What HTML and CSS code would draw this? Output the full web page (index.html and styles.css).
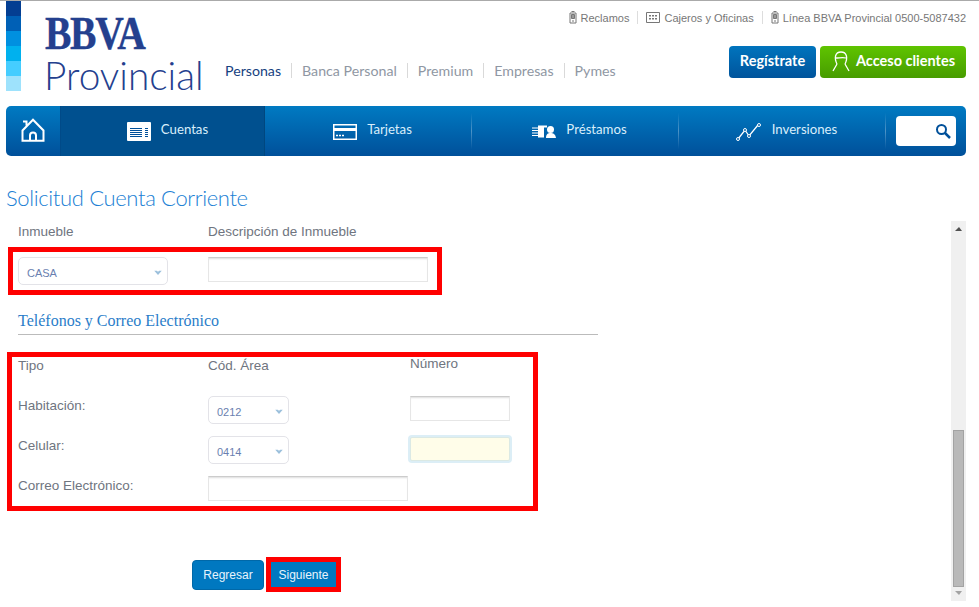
FILE: index.html
```html
<!DOCTYPE html>
<html lang="es">
<head>
<meta charset="utf-8">
<title>Solicitud Cuenta Corriente</title>
<link rel="stylesheet" href="styles.css">
</head>
<body>
<header class="header">
  <div class="strip"><i class="s1"></i><i class="s2"></i><i class="s3"></i><i class="s4"></i><i class="s5"></i><i class="s6"></i></div>
  <div class="logo">
    <div class="logo-bbva">BBVA</div>
    <div class="logo-prov">Provincial</div>
  </div>
  <nav class="segments">
    <a class="seg seg-on">Personas</a><a class="seg">Banca Personal</a><a class="seg">Premium</a><a class="seg">Empresas</a><a class="seg">Pymes</a>
  </nav>
  <div class="header-right">
    <div class="toplinks">
      <a class="toplink"><svg width="8" height="13" viewBox="0 0 8 13"><path d="M1 2h6v10H1z" fill="none" stroke="#777"/><path d="M2.500 0.500h3M2.500 3.500h3v4h-3z" fill="#999" stroke="#777"/><path d="M3 10h2" stroke="#777"/></svg>Reclamos</a>
      <a class="toplink"><svg width="14" height="11" viewBox="0 0 14 11"><path d="M.5.500h13v10H.5z" fill="none" stroke="#777"/><path d="M3 3h2v1.500H3zM6 3h2v1.500H6zM9 3h2v1.500H9zM3 6h2v1.500H3zM6 6h2v1.500H6zM9 6h2v1.500H9z" fill="#777"/></svg>Cajeros y Oficinas</a>
      <a class="toplink"><svg width="8" height="13" viewBox="0 0 8 13"><path d="M1 2h6v10H1z" fill="none" stroke="#777"/><path d="M2.500 0.500h3M2.500 3.500h3v4h-3z" fill="#999" stroke="#777"/><path d="M3 10h2" stroke="#777"/></svg>Línea BBVA Provincial 0500-5087432</a>
    </div>
    <div class="actions">
      <a class="btn-top btn-blue">Regístrate</a>
      <a class="btn-top btn-green"><svg width="20" height="24" viewBox="0 0 20 24"><path d="M6 15C3 9 4 3 10 3s7 6 4 12M6 15l-4 7M14 15l4 7M5 9c3 0 7-1 10 0" fill="none" stroke="#fff" stroke-width="1.300"/></svg>Acceso clientes</a>
    </div>
  </div>
</header>

<nav class="mainnav">
  <a class="nav-home"><svg width="24" height="24" viewBox="0 0 24 24"><path d="M1.500 12.500 12 1.800 22.500 12.500V22.800H1.500zM9 22.800v-5.300a3 3 0 0 1 6 0v5.300M2 3.500h3.500v4" fill="none" stroke="#fff" stroke-width="2"/></svg></a>
  <a class="nav-item nav-active"><svg width="24" height="19" viewBox="0 0 24 19"><rect y="0" width="24" height="19" rx="1" fill="#fff"/><path d="M3 6.500h12M3 8.500h12M3 10.500h12M3 12.500h12M3 14.500h12M18 6.500h3M18 8.500h3M18 10.500h3M18 12.500h3M18 14.500h3" stroke="#00509a"/></svg>Cuentas</a>
  <a class="nav-item"><svg width="24" height="16" viewBox="0 0 24 16"><rect x=".75" y=".75" width="22.500" height="14.500" fill="none" stroke="#fff" stroke-width="1.500"/><path d="M0 4h24v3H0z" fill="#fff"/><path d="M3 11.500h2M6 11.500h2M9 11.500h2" stroke="#fff" stroke-width="1.500"/></svg>Tarjetas</a>
  <a class="nav-item"><svg width="24" height="13" viewBox="0 0 24 13"><path d="M0 3h6M0 5.500h6M0 8h6M0 10.500h6" stroke="#fff"/><path d="M6 .5h6v12H6z" fill="#fff"/><path d="M12 .5h3v2h-3z" fill="#fff"/><circle cx="18.500" cy="4.500" r="3.500" fill="#fff"/><path d="M14 13c0-4 2-5 4.500-5S23.500 9 24 13z" fill="#fff"/></svg>Préstamos</a>
  <a class="nav-item"><svg width="26" height="18" viewBox="0 0 26 18"><path d="M2 16 9 7l4 6 9-11" fill="none" stroke="#fff" stroke-width="1.300"/><circle cx="2" cy="16" r="1.500" fill="#0060a8" stroke="#fff"/><circle cx="9" cy="7" r="1.500" fill="#0060a8" stroke="#fff"/><circle cx="13" cy="13" r="1.500" fill="#0060a8" stroke="#fff"/><circle cx="23" cy="2" r="1.500" fill="#0060a8" stroke="#fff"/></svg>Inversiones</a>
  <div class="nav-search">
    <div class="searchbox"><svg width="16" height="16" viewBox="0 0 16 16"><circle cx="6.500" cy="6.500" r="4.500" fill="none" stroke="#00509a" stroke-width="2"/><path d="m10 10 5 5" stroke="#00509a" stroke-width="2.500"/></svg></div>
  </div>
</nav>

<h1 class="title">Solicitud Cuenta Corriente</h1>

<main class="pane">
  <div class="content">
    <div class="row-labels">
      <span class="lab lab-a">Inmueble</span>
      <span class="lab">Descripción de Inmueble</span>
    </div>
    <div class="redbox box-one">
      <div class="fakeselect sel-wide">CASA<svg class="chev" width="8" height="5" viewBox="0 0 9 6"><path d="M0 1h3l1.500 1L6 1h3L4.500 6z" fill="#9cc0dc"/></svg></div>
      <div class="field field-desc"></div>
    </div>
    <h2 class="section">Teléfonos y Correo Electrónico</h2>
    <div class="redbox box-two">
      <span class="lab lab-tipo">Tipo</span><span class="lab lab-tipo">Cód. Área</span><span class="lab lab-num">Número</span>
      <span class="lab lab-row">Habitación:</span>
      <div class="fakeselect sel-small">0212<svg class="chev" width="8" height="5" viewBox="0 0 9 6"><path d="M0 1h3l1.500 1L6 1h3L4.500 6z" fill="#9cc0dc"/></svg></div>
      <div class="field field-num"></div>
      <span class="lab lab-row">Celular:</span>
      <div class="fakeselect sel-small">0414<svg class="chev" width="8" height="5" viewBox="0 0 9 6"><path d="M0 1h3l1.500 1L6 1h3L4.500 6z" fill="#9cc0dc"/></svg></div>
      <div class="field field-num field-focus"></div>
      <span class="lab lab-row">Correo Electrónico:</span>
      <div class="field field-mail"></div>
    </div>
    <div class="buttons">
      <a class="btn btn-back">Regresar</a>
      <div class="redwrap"><a class="btn btn-next">Siguiente</a></div>
    </div>
  </div>
  <div class="scrollbar">
    <span class="arrow arrow-up"></span>
    <span class="thumb"></span>
    <span class="arrow arrow-down"></span>
  </div>
</main>
</body>
</html>
```

FILE: styles.css
```css
* { box-sizing: border-box; }
html, body { margin: 0; padding: 0; }
body {
  width: 979px;
  height: 607px;
  overflow: hidden;
  background: #fff;
  border-top: 1px solid #aaa;
  font-family: "Liberation Sans", Arial, sans-serif;
  color: #6f7580;
}
.header {
  display: flex;
  height: 105px;
  padding: 0 13px 0 6px;
}
.strip { display: flex; flex: 0 0 15px; flex-direction: column; }
.strip i { display: block; height: 15px; }
.s1 { background: #043e92; }
.s2 { background: #0060b6; }
.s3 { background: #0090e0; }
.s4 { background: #00b1ee; }
.s5 { background: #45cdff; }
.s6 { background: #9ee2fc; }
.logo { flex: 0 0 202px; padding: 12px 0 0 24px; color: #24408e; }
.logo-bbva {
  font-family: "Liberation Serif", serif;
  font-weight: 700;
  font-size: 46px;
  line-height: 42px;
  letter-spacing: -1.500px;
  -webkit-text-stroke: .4px #24408e;
  transform: scaleX(.86);
  transform-origin: left center;
  white-space: nowrap;
}
.logo-prov {
  font-family: "Lato", sans-serif;
  font-weight: 300;
  font-size: 38.800px;
  line-height: 40px;
  margin-left: -1px;
  white-space: nowrap;
}
.segments {
  display: flex;
  flex: 0 0 300px;
  min-width: 0;
  align-items: center;
  height: 16px;
  margin: 61px 0 0 2px;
  font-family: "Lato", sans-serif;
  font-size: 14.200px;
}
.seg { color: #8f97a3; padding: 0 10px; border-left: 1px solid #d9d9d9; line-height: 15px; white-space: nowrap; }
.seg:first-child { padding-left: 0; border-left: 0; }
.seg-on { color: #16417f; }
.header-right {
  flex: 0 0 auto;
  margin-left: auto;
  display: flex;
  flex-direction: column;
  align-items: flex-end;
}
.toplinks { display: flex; height: 13px; margin-top: 10px; font-size: 11px; color: #777; }
.toplink { display: flex; align-items: center; gap: 4px; padding: 0 8px; border-left: 1px solid #ddd; white-space: nowrap; }
.toplink:first-child { border-left: 0; }
.toplink:last-child { padding-right: 0; }
.actions { display: flex; gap: 4px; margin-top: 22px; }
.btn-top {
  display: flex;
  align-items: center;
  justify-content: center;
  height: 32px;
  padding-bottom: 4px;
  border-radius: 4px;
  color: #fff;
  font-family: "Lato", sans-serif;
  font-weight: 700;
  font-size: 14.500px;
  white-space: nowrap;
}
.btn-blue { width: 87px; background: linear-gradient(#0074bd, #00549c); }
.btn-green { width: 146px; gap: 5px; background: linear-gradient(#5fc400, #479c00); }
.btn-green svg { margin-top: 2px; }

.mainnav {
  display: grid;
  grid-template-columns: 54px 205px 207px 207px 207px 80px;
  width: 960px;
  height: 50px;
  margin-left: 6px;
  border-radius: 5px;
  background: linear-gradient(#007ac2, #00509a);
  color: #d9eefb;
  font-family: "Lato", sans-serif;
  font-size: 13.200px;
  overflow: hidden;
}
.nav-home { display: flex; align-items: center; justify-content: center; padding-bottom: 2px; }
.nav-item {
  display: flex;
  align-items: center;
  justify-content: center;
  gap: 10px;
  padding: 0 0 5px 9px;
  border-right: 1px solid;
  border-image: linear-gradient(transparent 15%, rgba(255,255,255,.3) 50%, transparent 85%) 1;
}
.nav-item svg { margin-top: 6px; }
.nav-active {
  padding-left: 10px;
  background: #00508f;
  border: 0;
  border-left: 1px solid #004a88;
  border-right: 1px solid #00477f;
  border-image: none;
}
.nav-search { display: flex; align-items: center; justify-content: flex-end; padding-right: 10px; }
.searchbox {
  display: flex;
  align-items: center;
  justify-content: flex-end;
  width: 60px;
  height: 30px;
  padding-right: 5px;
  background: #fff;
  border-radius: 4px;
}

.title {
  margin: 29px 0 0 6px;
  font-family: "Lato", sans-serif;
  font-weight: 300;
  font-size: 22px;
  letter-spacing: -.35px;
  line-height: 26px;
  color: #2080d4;
}
.pane { display: flex; height: 380px; margin: 10px 0 0 6px; width: 960px; }
.content { flex: 1; font-size: 13.500px; }
.lab { font-size: 13.500px; line-height: 16px; color: #6f7580; white-space: nowrap; }
.row-labels { display: flex; padding: 3px 0 0 12px; height: 26px; }
.lab-a { width: 190px; }
.redbox { border: 5px solid #f00; }
.box-one {
  display: flex;
  width: 434px;
  height: 48px;
  margin-left: 2px;
  padding: 5px 0 0 5px;
}
.fakeselect {
  position: relative;
  display: flex;
  align-items: center;
  height: 28px;
  padding: 3px 0 0 8px;
  border: 1px solid #e3e3e8;
  border-radius: 5px;
  background: #fff;
  color: #6a7fb0;
  font-size: 11px;
}
.chev { position: absolute; right: 5px; top: 12px; }
.sel-wide { width: 150px; }
.sel-small { width: 81px; }
.field {
  height: 25px;
  border: 1px solid #e6e6e6;
  border-top: 1px solid #ccc;
  background: #fff;
  box-shadow: inset 0 2px 2px -1px #ddd;
}
.field-desc { width: 220px; margin-left: 40px; }
.section {
  width: 580px;
  height: 24px;
  margin: 16px 0 0 12px;
  border-bottom: 1px solid #bbb;
  font-family: "Liberation Serif", serif;
  font-weight: 400;
  font-size: 16px;
  line-height: 19px;
  color: #2a7dc9;
}
.box-two {
  display: grid;
  grid-template-columns: 190px 202px 100px;
  grid-template-rows: 39px 40px 40px 30px;
  width: 531px;
  height: 159px;
  margin: 17px 0 0 1px;
  padding: 0 0 0 6px;
}
.lab-tipo { margin-top: 1px; }
.lab-num { margin-top: -1px; }
.lab-row { padding-top: 2px; }
.field-num { width: 100px; }
.field-focus {
  background: #fffde9;
  border-color: #dbe9e4;
  height: 24px;
  margin-top: 1px;
  border-radius: 2px;
  box-shadow: 0 0 0 2px #dceef6;
}
.field-mail { grid-column: 2 / span 2; width: 200px; }
.buttons { display: flex; align-items: center; gap: 2px; margin: 46px 0 0 186px; }
.btn {
  display: flex;
  align-items: center;
  justify-content: center;
  height: 30px;
  background: #0078c0;
  color: #e8f4fc;
  font-size: 12px;
}
.btn-back { width: 72px; border: 1px solid #0068a8; border-radius: 4px; }
.btn-next { width: 65px; height: 25px; }
.redwrap { border: 5px solid #f00; }

.scrollbar {
  position: relative;
  flex: 0 0 15px;
  background: #f0f0f0;
}
.arrow { position: absolute; left: 4px; width: 0; height: 0; border-left: 4px solid transparent; border-right: 3px solid transparent; }
.arrow-up { top: 6px; border-bottom: 4px solid #505050; }
.arrow-down { bottom: 6px; border-top: 4px solid #a3a3a3; }
.thumb {
  position: absolute;
  left: 2px;
  top: 209px;
  width: 11px;
  height: 157px;
  background: #b9b9b9;
  border: 1px solid #a3a3a3;
}
```
